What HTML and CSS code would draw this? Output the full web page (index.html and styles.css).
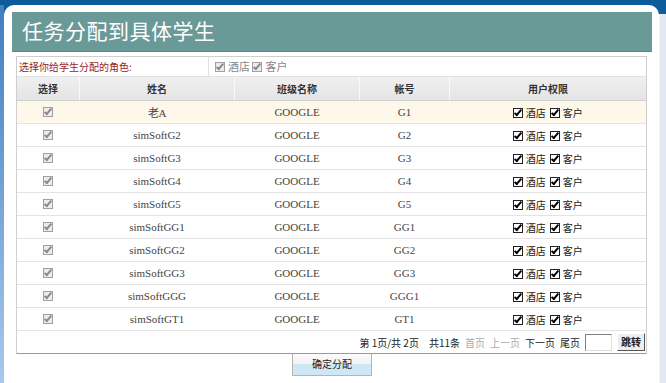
FILE: index.html
```html
<!DOCTYPE html>
<html lang="zh-CN">
<head>
    <meta charset="UTF-8">
    <title>任务分配到具体学生</title>
    <link rel="stylesheet" href="styles.css">
</head>
<body>
    <div class="frame">
        <div class="side-left"></div>
        <div class="panel">
            <h1 class="title">任务分配到具体学生</h1>

            <div class="box">
                <div class="role-row">
                    <div class="role-label">选择你给学生分配的角色:</div>
                    <div class="role-opts">
                        <span class="cb off"></span>酒店
                        <span class="cb off"></span>客户
                    </div>
                </div>

                <table class="list">
                    <thead>
                        <tr>
                            <th class="c1">选择</th>
                            <th class="c2">姓名</th>
                            <th class="c3">班级名称</th>
                            <th class="c4">帐号</th>
                            <th>用户权限</th>
                        </tr>
                    </thead>
                    <tbody id="rows"></tbody>
                </table>

                <div class="pager">
                    <span>第 1页/共 2页</span>
                    <span class="gap">共11条</span>
                    <span class="dim">首页</span>
                    <span class="dim">上一页</span>
                    <span>下一页</span>
                    <span>尾页</span>
                    <span class="page-input"></span>
                    <span class="go">跳转</span>
                </div>
            </div>

            <div class="actions">
                <span class="submit">确定分配</span>
            </div>
        </div>
        <div class="side-right"></div>
    </div>

    <script>
        const students = [
            ['老A', 'G1'],
            ['simSoftG2', 'G2'],
            ['simSoftG3', 'G3'],
            ['simSoftG4', 'G4'],
            ['simSoftG5', 'G5'],
            ['simSoftGG1', 'GG1'],
            ['simSoftGG2', 'GG2'],
            ['simSoftGG3', 'GG3'],
            ['simSoftGGG', 'GGG1'],
            ['simSoftGT1', 'GT1']
        ];

        document.getElementById('rows').innerHTML = students.map(([name, acc], i) => `
            <tr class="${i === 0 ? 'hl' : ''}">
                <td><span class="cb off"></span></td>
                <td>${name}</td>
                <td>GOOGLE</td>
                <td>${acc}</td>
                <td class="rights"><span class="cb"></span>酒店<span class="cb second"></span>客户</td>
            </tr>
        `).join('');
    </script>
</body>
</html>
```

FILE: styles.css
```css
html, body {
    margin: 0;
    height: 100%;
}
body {
    background: linear-gradient(#0d5c9c 0, #0d5c9c 14px, #e3e9f0 14px);
    font-family: "Noto Sans CJK SC", sans-serif;
    color: #333;
    overflow: hidden;
}
.frame {
    display: flex;
    height: 383px;
}
.side-left {
    width: 4px;
    margin-top: 5px;
    background: linear-gradient(#3f7fc0, #a9c9ec);
}
.side-right {
    width: 6px;
    margin-top: 14px;
    background: #e3e9f0;
    border-left: 1px solid #f4f7fa;
}
.panel {
    flex: 1;
    min-width: 0;
    margin-top: 5px;
    background: #fff;
    border-radius: 10px 10px 0 0;
    padding: 7px 7px 0 8px;
}
.title {
    margin: 0;
    height: 39px;
    line-height: 37px;
    padding-left: 10px;
    background: #6a9a98;
    border-bottom: 1px solid #5d8785;
    color: #fff;
    font-size: 21px;
    font-weight: normal;
    letter-spacing: 0.5px;
}
.box {
    margin: 4px 5px 0 4px;
    border: 1px solid #cfcfcf;
    border-bottom-color: #9a9a9a;
}
.role-row {
    display: flex;
    height: 19px;
    border-bottom: 1px solid #e2e2e2;
    font-size: 10px;
    line-height: 19px;
}
.role-label {
    width: 189px;
    padding-left: 2px;
    color: #9b1c1c;
    border-right: 1px solid #e2e2e2;
}
.role-opts {
    padding-left: 6px;
    color: #888;
    font-size: 11px;
}
.cb {
    display: inline-block;
    position: relative;
    width: 8px;
    height: 8px;
    margin-right: 3px;
    border: 1px solid #222;
    background: #fff;
    vertical-align: -1px;
}
.cb.second {
    margin-left: 4px;
}
.cb::after {
    content: "";
    position: absolute;
    left: 2px;
    top: -1px;
    width: 2px;
    height: 6px;
    border: solid #000;
    border-width: 0 2px 2px 0;
    transform: rotate(40deg);
}
.cb.off {
    border-color: #a0a0a0;
    background: #ececec;
}
.cb.off::after {
    border-color: #8a8a8a;
}
.list {
    width: 100%;
    border-collapse: collapse;
    table-layout: fixed;
}
.list th {
    height: 23px;
    padding: 0;
    background: linear-gradient(#f0f0f0, #e4e4e4);
    border-left: 1px solid #fafafa;
    border-bottom: 1px solid #d0d0d0;
    font-size: 10px;
    font-weight: bold;
    color: #333;
}
.list th:first-child {
    border-left: none;
}
.c1 { width: 62px; }
.c2 { width: 154px; }
.c3 { width: 124px; }
.c4 { width: 89px; }
.list td {
    height: 22px;
    padding: 0;
    text-align: center;
    border-bottom: 1px solid #e4e4e4;
    font-family: "Liberation Serif", serif;
    font-size: 11px;
    color: #444;
}
.list td .cb.off {
    margin-right: 0;
}
.list tr.hl td {
    background: #fdf8ea;
}
.list td.rights {
    font-family: "Noto Sans CJK SC", sans-serif;
    font-size: 10px;
    color: #222;
}
.pager {
    display: flex;
    justify-content: flex-end;
    align-items: center;
    gap: 5px;
    height: 22px;
    padding-right: 1px;
    font-size: 10px;
    color: #222;
}
.pager .gap {
    margin-left: 5px;
}
.pager .dim {
    color: #aaa;
}
.page-input {
    width: 25px;
    height: 15px;
    border: 1px solid #7f7f7f;
    border-right-color: #ddd;
    border-bottom-color: #ddd;
}
.go {
    height: 16px;
    line-height: 16px;
    padding: 0 3px;
    background: #eee;
    border: 1px solid #fff;
    border-right-color: #555;
    border-bottom-color: #555;
    font-weight: bold;
}
.actions {
    display: flex;
    justify-content: center;
}
.submit {
    width: 78px;
    height: 21px;
    line-height: 20px;
    text-align: center;
    font-size: 10px;
    color: #222;
    border: 1px solid #b5b5b5;
    border-top: none;
    background: linear-gradient(#fbfbfb 0, #f1f1f1 50%, #cfe6f7 50%, #cfe6f7 100%);
}
```
